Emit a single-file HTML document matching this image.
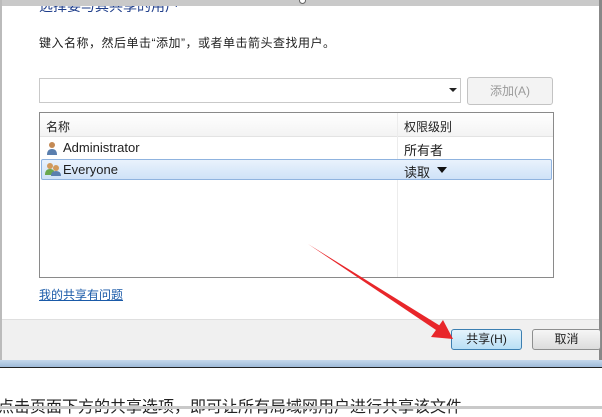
<!DOCTYPE html>
<html><head><meta charset="utf-8"><style>
*{margin:0;padding:0;box-sizing:border-box}
body{width:602px;height:409px;overflow:hidden;background:#fff;position:relative;font-family:"Liberation Sans","Noto Sans CJK SC",sans-serif;font-size:12px;color:#1e1e1e}
.a{position:absolute}
</style></head><body>
<div class="a" style="left:39px;top:-4px;font-size:14px;color:#1e3d8a;white-space:nowrap">选择要与其共享的用户</div>
<div class="a" style="left:0;top:0;width:602px;height:6px;background:#c9c9c9"></div>
<div class="a" style="left:299px;top:-3px;width:7px;height:7px;border:1px solid #666;border-radius:50%;background:#fff"></div>
<div class="a" style="left:0;top:0;width:2px;height:368px;background:#bbb"></div>
<div class="a" style="left:599px;top:0;width:3px;height:368px;background:#888"></div>
<div class="a" style="left:39px;top:34px;white-space:nowrap;letter-spacing:0.5px">键入名称，然后单击“添加”，或者单击箭头查找用户。</div>
<div class="a" style="left:39px;top:78px;width:422px;height:25px;border:1px solid #c9c9c9;background:#fff"></div>
<div class="a" style="left:449px;top:88px;width:0;height:0;border-left:4px solid transparent;border-right:4px solid transparent;border-top:4px solid #222"></div>
<div class="a" style="left:467px;top:77px;width:86px;height:28px;border:1px solid #c3c3c3;border-radius:3px;background:#f3f3f3;color:#9a9a9a;text-align:center;line-height:26px">添加(A)</div>
<div class="a" style="left:39px;top:112px;width:515px;height:166px;border:1px solid #8a8a8a;background:#fff"></div>
<div class="a" style="left:40px;top:113px;width:513px;height:24px;background:linear-gradient(#fff,#f3f3f3);border-bottom:1px solid #e3e3e3"></div>
<div class="a" style="left:397px;top:113px;width:1px;height:164px;background:#ececec"></div>
<div class="a" style="left:46px;top:118px">名称</div>
<div class="a" style="left:404px;top:118px">权限级别</div>
<div class="a" style="left:41px;top:159px;width:511px;height:21px;border:1px solid #8fb3df;border-radius:2px;background:linear-gradient(#e9f2fc,#cfe2f8)"></div>
<svg class="a" style="left:46px;top:141px" width="12" height="14"><circle cx="6" cy="4" r="3" fill="#c48a55"/><path d="M1 14 Q1 8 6 8 Q11 8 11 14Z" fill="#5a7fae"/></svg>
<div class="a" style="left:63px;top:140px;font-size:13px">Administrator</div>
<div class="a" style="left:404px;top:140px;font-size:13px">所有者</div>
<svg class="a" style="left:45px;top:162px" width="16" height="14"><circle cx="5" cy="4" r="3" fill="#d19a5c"/><path d="M0 13 Q0 7 5 7 Q10 7 10 13Z" fill="#6aa84f"/><circle cx="11" cy="6" r="3" fill="#d19a5c"/><path d="M6 14 Q6 9 11 9 Q16 9 16 14Z" fill="#5a7fae"/></svg>
<div class="a" style="left:63px;top:162px;font-size:13px">Everyone</div>
<div class="a" style="left:404px;top:162px;font-size:13px">读取</div>
<div class="a" style="left:437px;top:167px;width:0;height:0;border-left:5px solid transparent;border-right:5px solid transparent;border-top:6px solid #111"></div>
<div class="a" style="left:39px;top:286px;color:#1a5aa8;text-decoration:underline;white-space:nowrap">我的共享有问题</div>
<div class="a" style="left:2px;top:319px;width:597px;height:41px;background:#f0f0f0;border-top:1px solid #dfdfdf"></div>
<div class="a" style="left:451px;top:329px;width:71px;height:21px;border:1px solid #3c7fb1;border-radius:3px;background:linear-gradient(#e5f4fc,#b9dff5);text-align:center;line-height:19px">共享(H)</div>
<div class="a" style="left:532px;top:329px;width:69px;height:21px;border:1px solid #8e8f8f;border-radius:3px;background:linear-gradient(#f6f6f6,#dcdcdc);text-align:center;line-height:19px">取消</div>
<div class="a" style="left:0;top:360px;width:602px;height:7px;background:linear-gradient(#c5d8ec,#9fbbd9)"></div>
<div class="a" style="left:0;top:367px;width:602px;height:1px;background:#222"></div>
<div class="a" style="left:-2px;top:393px;font-size:16px;white-space:nowrap;color:#222">点击页面下方的共享选项，即可让所有局域网用户进行共享该文件</div>
<div class="a" style="left:0;top:406px;width:602px;height:3px;background:#c9c9c9"></div>
<svg class="a" style="left:0;top:0" width="602" height="409"><polygon points="308,244 442,327 439,332" fill="#e8262a"/><polygon points="453,339 431,337 443,320" fill="#e8262a"/></svg>
</body></html>
